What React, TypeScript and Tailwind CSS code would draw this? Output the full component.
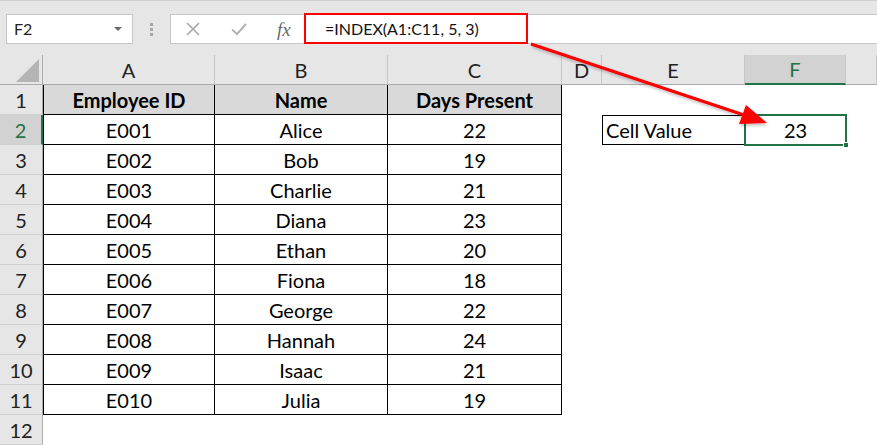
import React from 'react';

const rows: [string, string, string][] = [
  ['E001', 'Alice', '22'],
  ['E002', 'Bob', '19'],
  ['E003', 'Charlie', '21'],
  ['E004', 'Diana', '23'],
  ['E005', 'Ethan', '20'],
  ['E006', 'Fiona', '18'],
  ['E007', 'George', '22'],
  ['E008', 'Hannah', '24'],
  ['E009', 'Isaac', '21'],
  ['E010', 'Julia', '19'],
];

const cols = ['A', 'B', 'C', 'D', 'E', 'F', ''];

const font = { fontFamily: 'Lato, "Open Sans", sans-serif' };

const App: React.FC = () => {
  return (
    <div className="relative w-[877px] h-[445px] overflow-hidden bg-white text-black" style={font}>
      {/* Formula bar */}
      <div className="h-[55px] bg-[#e6e6e6] border-t border-[#d0d0d0] flex items-start pt-[13px] pl-[6px]">
        <div className="w-[127px] h-[30px] bg-white border border-[#c6c6c6] flex items-center justify-between pl-[7px] pr-[10px]">
          <span className="text-[16px] text-[#222]">F2</span>
          <span className="w-0 h-0 border-l-[4px] border-r-[4px] border-t-[4px] border-l-transparent border-r-transparent border-t-[#6b6b6b]" />
        </div>
        <div className="w-[37px] h-[30px] flex flex-col items-center justify-center gap-[2px]">
          <span className="w-[3px] h-[3px] bg-[#a6a6a6]" />
          <span className="w-[3px] h-[3px] bg-[#a6a6a6]" />
          <span className="w-[3px] h-[3px] bg-[#a6a6a6]" />
        </div>
        <div className="flex-1 h-[30px] bg-white border border-r-0 border-[#c6c6c6] flex items-center">
          <div className="w-[133px] flex items-center">
            <svg className="ml-[15px]" width="14" height="14" viewBox="0 0 14 14">
              <path d="M1 1 L13 13 M13 1 L1 13" stroke="#a8a8a8" strokeWidth="1.6" fill="none" />
            </svg>
            <svg className="ml-[31px]" width="16" height="14" viewBox="0 0 16 14">
              <path d="M1 7.5 L6 12 L15 2" stroke="#b4b4b4" strokeWidth="2" fill="none" />
            </svg>
            <span
              className="ml-[30px] text-[19px] italic text-[#6a6a6a] leading-none"
              style={{ fontFamily: '"Liberation Serif", serif' }}
            >
              fx
            </span>
          </div>
          <div className="w-[224px] h-[31px] -mt-[1px] border-2 border-[#ff0000] flex items-center pl-[19px]">
            <span className="text-[16px] text-[#111]">=INDEX(A1:C11, 5, 3)</span>
          </div>
        </div>
      </div>

      {/* Sheet grid */}
      <div className="grid grid-cols-[43px_172px_173px_174px_40px_143px_101px_1fr] auto-rows-[30px] text-[20px]">
        {/* header row */}
        <div className="bg-[#e6e6e6] border-r border-b border-[#ababab] flex items-end justify-end pr-[3px] pb-[2px]">
          <span className="w-0 h-0 border-l-[23px] border-b-[23px] border-l-transparent border-b-[#b4b4b4]" />
        </div>
        {cols.map((c, i) =>
          c === 'F' ? (
            <div
              key={i}
              className="bg-[#d2d2d2] border-r border-[#c6c6c6] border-b-2 border-b-[#217346] flex items-center justify-center text-[#217346]"
            >
              {c}
            </div>
          ) : (
            <div
              key={i}
              className="bg-[#e6e6e6] border-r border-b border-r-[#c6c6c6] border-b-[#ababab] flex items-center justify-center text-[#222]"
            >
              {c}
            </div>
          )
        )}

        {/* row 1: table header */}
        <div className="bg-[#e6e6e6] border-r border-b border-r-[#ababab] border-b-[#d0d0d0] flex items-center justify-center text-[#222]">
          1
        </div>
        {['Employee ID', 'Name', 'Days Present'].map((h, i) => (
          <div
            key={h}
            className={
              i === 0
                ? 'bg-[#d9d9d9] border-l border-r border-b border-black flex items-center justify-center font-bold'
                : 'bg-[#d9d9d9] border-r border-b border-black flex items-center justify-center font-bold'
            }
          >
            {h}
          </div>
        ))}
        <div />
        <div />
        <div />
        <div />

        {/* data rows */}
        {rows.map((r, idx) => {
          const n = idx + 2;
          return (
            <React.Fragment key={r[0]}>
              {n === 2 ? (
                <div className="bg-[#d2d2d2] border-r-2 border-b border-r-[#217346] border-b-[#d0d0d0] flex items-center justify-center text-[#217346]">
                  {n}
                </div>
              ) : (
                <div className="bg-[#e6e6e6] border-r border-b border-r-[#ababab] border-b-[#d0d0d0] flex items-center justify-center text-[#222]">
                  {n}
                </div>
              )}
              <div className="border-l border-r border-b border-black flex items-center justify-center">{r[0]}</div>
              <div className="border-r border-b border-black flex items-center justify-center">{r[1]}</div>
              <div className="border-r border-b border-black flex items-center justify-center">{r[2]}</div>
              <div />
              {n === 2 ? (
                <>
                  <div className="border border-black flex items-center pl-[3px]">Cell Value</div>
                  <div className="relative flex items-center justify-center">
                    <div className="absolute -top-[1px] -left-[1px] -right-[1px] -bottom-[1px] border-2 border-[#217346]" />
                    <div className="absolute -right-[3px] -bottom-[3px] w-[6px] h-[6px] bg-[#217346] border border-white" />
                    <span>23</span>
                  </div>
                </>
              ) : (
                <>
                  <div />
                  <div />
                </>
              )}
              <div />
            </React.Fragment>
          );
        })}

        {/* row 12 */}
        <div className="bg-[#e6e6e6] border-r border-b border-r-[#ababab] border-b-[#d0d0d0] flex items-center justify-center text-[#222]">
          12
        </div>
      </div>

      {/* annotation arrow */}
      <svg className="absolute inset-0 pointer-events-none" width="877" height="445" viewBox="0 0 877 445">
        <defs>
          <filter id="sh" x="-20%" y="-20%" width="140%" height="140%">
            <feDropShadow dx="1" dy="2" stdDeviation="1.5" floodColor="#000" floodOpacity="0.25" />
          </filter>
        </defs>
        <g filter="url(#sh)">
          <line x1="531" y1="44" x2="744" y2="115" stroke="#ff0000" strokeWidth="3" />
          <polygon points="767,123 746,105 739,124" fill="#ff0000" />
        </g>
      </svg>
    </div>
  );
};

export default App;
